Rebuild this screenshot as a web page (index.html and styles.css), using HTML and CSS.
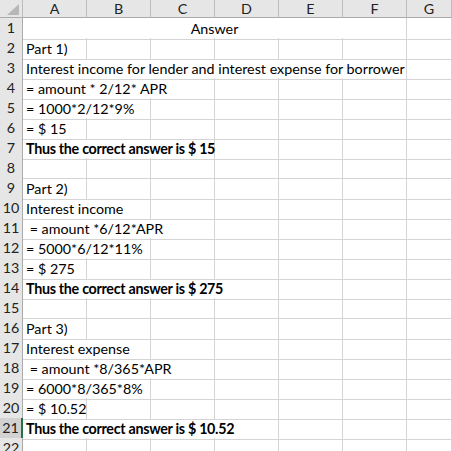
FILE: index.html
```html
<!DOCTYPE html>
<html lang="en">
<head>
  <meta charset="UTF-8" />
  <title>Answer</title>
  <link rel="stylesheet" href="styles.css">
</head>
<body>
<div class="sheet">
  <div class="row head">
    <div class="corner"><span class="tri"></span></div>
    <div class="col">A</div><div class="col">B</div><div class="col">C</div>
    <div class="col">D</div><div class="col">E</div><div class="col">F</div><div class="col">G</div>
  </div>

  <div class="row"><div class="num">1</div><div class="cell s6 center">Answer</div><div class="cell"></div></div>
  <div class="row"><div class="num">2</div><div class="cell">Part 1)</div><div class="cell"></div><div class="cell"></div><div class="cell"></div><div class="cell"></div><div class="cell"></div><div class="cell"></div></div>
  <div class="row"><div class="num">3</div><div class="cell s6">Interest income for lender and interest expense for borrower</div><div class="cell"></div></div>
  <div class="row"><div class="num">4</div><div class="cell s3">= amount * 2/12* APR</div><div class="cell"></div><div class="cell"></div><div class="cell"></div><div class="cell"></div></div>
  <div class="row"><div class="num">5</div><div class="cell s2">= 1000*2/12*9%</div><div class="cell"></div><div class="cell"></div><div class="cell"></div><div class="cell"></div><div class="cell"></div></div>
  <div class="row"><div class="num">6</div><div class="cell">= $ 15</div><div class="cell"></div><div class="cell"></div><div class="cell"></div><div class="cell"></div><div class="cell"></div><div class="cell"></div></div>
  <div class="row"><div class="num">7</div><div class="cell s3 bold">Thus the correct answer is $ 15</div><div class="cell"></div><div class="cell"></div><div class="cell"></div><div class="cell"></div></div>
  <div class="row"><div class="num">8</div><div class="cell"></div><div class="cell"></div><div class="cell"></div><div class="cell"></div><div class="cell"></div><div class="cell"></div><div class="cell"></div></div>
  <div class="row"><div class="num">9</div><div class="cell">Part 2)</div><div class="cell"></div><div class="cell"></div><div class="cell"></div><div class="cell"></div><div class="cell"></div><div class="cell"></div></div>
  <div class="row"><div class="num">10</div><div class="cell s2">Interest income</div><div class="cell"></div><div class="cell"></div><div class="cell"></div><div class="cell"></div><div class="cell"></div></div>
  <div class="row"><div class="num">11</div><div class="cell s3">&nbsp;= amount *6/12*APR</div><div class="cell"></div><div class="cell"></div><div class="cell"></div><div class="cell"></div></div>
  <div class="row"><div class="num">12</div><div class="cell s2">= 5000*6/12*11%</div><div class="cell"></div><div class="cell"></div><div class="cell"></div><div class="cell"></div><div class="cell"></div></div>
  <div class="row"><div class="num">13</div><div class="cell">= $ 275</div><div class="cell"></div><div class="cell"></div><div class="cell"></div><div class="cell"></div><div class="cell"></div><div class="cell"></div></div>
  <div class="row"><div class="num">14</div><div class="cell s4 bold">Thus the correct answer is $ 275</div><div class="cell"></div><div class="cell"></div><div class="cell"></div></div>
  <div class="row"><div class="num">15</div><div class="cell"></div><div class="cell"></div><div class="cell"></div><div class="cell"></div><div class="cell"></div><div class="cell"></div><div class="cell"></div></div>
  <div class="row"><div class="num">16</div><div class="cell">Part 3)</div><div class="cell"></div><div class="cell"></div><div class="cell"></div><div class="cell"></div><div class="cell"></div><div class="cell"></div></div>
  <div class="row"><div class="num">17</div><div class="cell s2">Interest expense</div><div class="cell"></div><div class="cell"></div><div class="cell"></div><div class="cell"></div><div class="cell"></div></div>
  <div class="row"><div class="num">18</div><div class="cell s3">&nbsp;= amount *8/365*APR</div><div class="cell"></div><div class="cell"></div><div class="cell"></div><div class="cell"></div></div>
  <div class="row"><div class="num">19</div><div class="cell s2">= 6000*8/365*8%</div><div class="cell"></div><div class="cell"></div><div class="cell"></div><div class="cell"></div><div class="cell"></div></div>
  <div class="row"><div class="num">20</div><div class="cell">= $ 10.52</div><div class="cell"></div><div class="cell"></div><div class="cell"></div><div class="cell"></div><div class="cell"></div><div class="cell"></div></div>
  <div class="row"><div class="num sel">21</div><div class="cell s4 bold">Thus the correct answer is $ 10.52</div><div class="cell"></div><div class="cell"></div><div class="cell"></div></div>
  <div class="row"><div class="num">22</div><div class="cell"></div><div class="cell"></div><div class="cell"></div><div class="cell"></div><div class="cell"></div><div class="cell"></div><div class="cell"></div></div>
</div>
</body>
</html>
```

FILE: styles.css
```css
:root { --grid:#d4d4d4; --hdr:#e6e6e6; --hdrline:#bcbcbc; --green:#217346; }
*{box-sizing:border-box}
body{margin:0;background:#fff;color:#000;font-family:Lato,"Open Sans",sans-serif;font-size:14.3px;overflow:hidden}
.sheet{width:452px}
.row{display:grid;grid-template-columns:23px repeat(6,64px) 1fr;height:20px}
.row.head{height:18px}

.corner,.col{background:var(--hdr);border-bottom:1px solid #ababab}
.corner{position:relative;border-right:1px solid var(--hdrline)}
.tri{position:absolute;right:3px;bottom:2px;width:0;height:0;border-left:12px solid transparent;border-bottom:11px solid #b7b7b7}
.col{border-right:1px solid var(--hdrline);color:#222;text-align:center;line-height:17px;font-size:14.3px}

.num{background:var(--hdr);border-right:1px solid #ababab;border-bottom:1px solid #c9c9c9;color:#222;text-align:center;line-height:20px;font-size:14.3px}
.num.sel{background:#d2d2d2;border-right:2px solid var(--green)}

.cell{border-right:1px solid var(--grid);border-bottom:1px solid var(--grid);white-space:nowrap;padding:0 0 0 3px;line-height:21px;overflow:visible}
.center{text-align:center;padding:0}
.bold{font-weight:bold;letter-spacing:-0.3px}
.s2{grid-column:span 2}
.s3{grid-column:span 3}
.s4{grid-column:span 4}
.s6{grid-column:span 6}
```
